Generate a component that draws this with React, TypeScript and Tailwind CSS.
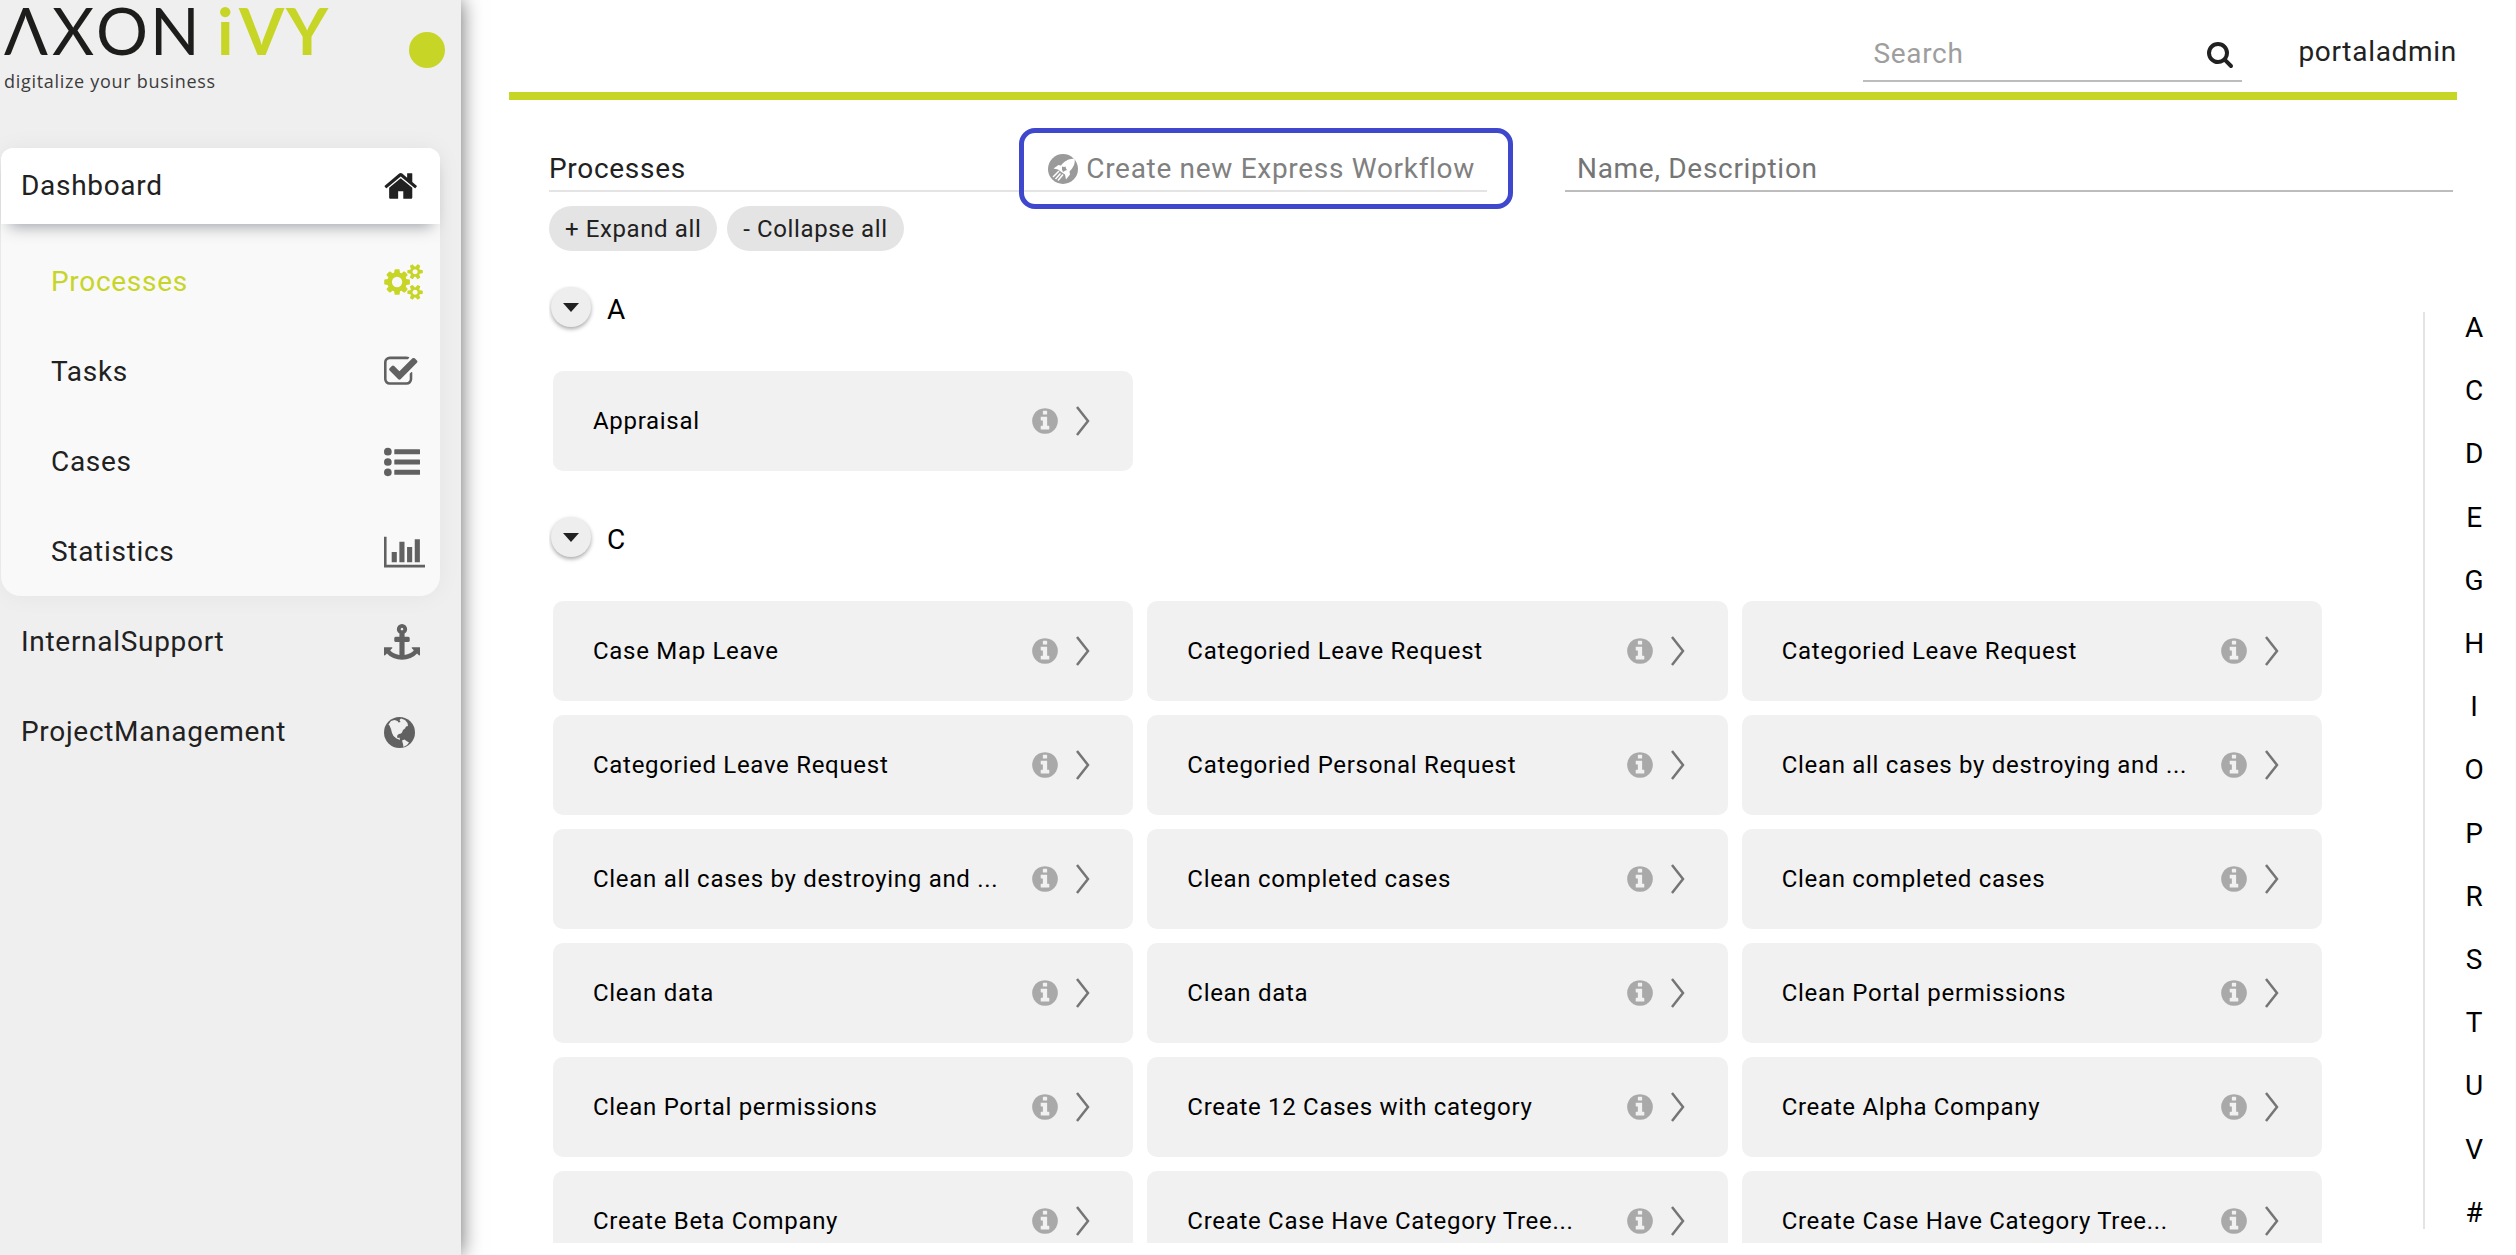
import React from "react";

type GlyphProps = { d: string; size: string; box?: string; className?: string };

function Glyph({ d, size, box = "0 0 1792 1792", className = "" }: GlyphProps) {
  return (
    <svg viewBox={box} className={`${size} shrink-0 ${className}`} fill="currentColor" aria-hidden="true">
      <path d={d} />
    </svg>
  );
}

const HOME =
  "M1472 992v480q0 26-19 45t-45 19h-384v-384h-256v384h-384q-26 0-45-19t-19-45v-480q0-1 .5-3t.5-3l575-474 575 474q1 2 1 6zm223-69l-62 74q-8 9-21 11h-3q-13 0-21-7l-692-577-692 577q-12 8-24 7-13-2-21-11l-62-74q-8-10-7-23.5t11-21.5l719-599q32-26 76-26t76 26l244 204v-195q0-14 9-23t23-9h192q14 0 23 9t9 23v408l219 182q10 8 11 21.5t-7 23.5z";
const CHECK =
  "M1472 930v318q0 119-84.5 203.5t-203.5 84.5h-832q-119 0-203.5-84.5t-84.5-203.5v-832q0-119 84.5-203.5t203.5-84.5h832q63 0 117 25 15 7 18 23 3 17-9 29l-49 49q-10 10-23 10-3 0-9-2-23-6-45-6h-832q-66 0-113 47t-47 113v832q0 66 47 113t113 47h832q66 0 113-47t47-113v-254q0-13 9-22l64-64q10-10 23-10 6 0 12 3 20 8 20 29zm231-489l-814 814q-24 24-57 24t-57-24l-430-430q-24-24-24-57t24-57l110-110q24-24 57-24t57 24l263 263 647-647q24-24 57-24t57 24l110 110q24 24 24 57t-24 57z";
const CHART =
  "M640 896v512h-256v-512h256zm384-512v1024h-256v-1024h256zm1024 1152v128h-2048v-1536h128v1408h1920zm-640-896v768h-256v-768h256zm384-384v1152h-256v-1152h256z";
const COGS =
  "M896 896q0-106-75-181t-181-75-181 75-75 181 75 181 181 75 181-75 75-181zm768 512q0-52-38-90t-90-38-90 38-38 90q0 53 37.5 90.5t90.5 37.5 90.5-37.5 37.5-90.5zm0-1024q0-52-38-90t-90-38-90 38-38 90q0 53 37.5 90.5t90.5 37.5 90.5-37.5 37.5-90.5zm-384 421v185q0 10-7 19.5t-16 10.5l-155 24q-11 35-32 76 34 48 90 115 7 11 7 20 0 12-7 19-23 30-82.5 89.5t-78.5 59.5q-11 0-21-7l-115-90q-37 19-77 31-11 108-23 155-7 24-30 24h-186q-11 0-20-7.5t-10-17.5l-23-153q-34-10-75-31l-118 89q-7 7-20 7-11 0-21-8-144-133-144-160 0-9 7-19 10-14 41-53t47-61q-23-44-35-82l-152-24q-10-1-17-9.5t-7-19.5v-185q0-10 7-19.5t16-10.5l155-24q11-35 32-76-34-48-90-115-7-11-7-20 0-12 7-20 22-30 82-89t79-59q11 0 21 7l115 90q34-18 77-32 11-108 23-154 7-24 30-24h186q11 0 20 7.5t10 17.5l23 153q34 10 75 31l118-89q8-7 20-7 11 0 21 8 144 133 144 160 0 8-7 19-12 16-42 54t-45 60q23 48 34 82l152 23q10 2 17 10.5t7 19.5zm640 533v140q0 16-149 31-12 27-30 52 51 113 51 138 0 4-4 7-122 71-124 71-8 0-46-47t-52-68q-20 2-30 2t-30-2q-14 21-52 68t-46 47q-2 0-124-71-4-3-4-7 0-25 51-138-18-25-30-52-149-15-149-31v-140q0-16 149-31 13-29 30-52-51-113-51-138 0-4 4-7 4-2 35-20t59-34 30-16q8 0 46 46.5t52 67.5q20-2 30-2t30 2q51-71 92-112l6-2q4 0 124 70 4 3 4 7 0 25-51 138 17 23 30 52 149 15 149 31zm0-1024v140q0 16-149 31-12 27-30 52 51 113 51 138 0 4-4 7-122 71-124 71-8 0-46-47t-52-68q-20 2-30 2t-30-2q-14 21-52 68t-46 47q-2 0-124-71-4-3-4-7 0-25 51-138-18-25-30-52-149-15-149-31v-140q0-16 149-31 13-29 30-52-51-113-51-138 0-4 4-7 4-2 35-20t59-34 30-16q8 0 46 46.5t52 67.5q20-2 30-2t30 2q51-71 92-112l6-2q4 0 124 70 4 3 4 7 0 25-51 138 17 23 30 52 149 15 149 31z";
const LIST =
  "M384 1408a192 192 0 1 1-384 0 192 192 0 0 1 384 0zm0-512a192 192 0 1 1-384 0 192 192 0 0 1 384 0zm0-512a192 192 0 1 1-384 0 192 192 0 0 1 384 0zM544 1280h1216q32 0 32 32v192q0 32-32 32h-1216q-32 0-32-32v-192q0-32 32-32zm0-512h1216q32 0 32 32v192q0 32-32 32h-1216q-32 0-32-32v-192q0-32 32-32zm0-512h1216q32 0 32 32v192q0 32-32 32h-1216q-32 0-32-32v-192q0-32 32-32z";
const ANCHOR =
  "M960 256q0-26-19-45t-45-19-45 19-19 45 19 45 45 19 45-19 19-45zm832 928v352q0 22-20 30-8 2-12 2-12 0-23-9l-93-93q-119 143-318.5 226.5t-429.5 83.5-429.5-83.5-318.5-226.5l-93 93q-9 9-23 9-4 0-12-2-20-8-20-30v-352q0-14 9-23t23-9h352q22 0 30 20 8 19-7 35l-100 100q67 91 189.5 153.5t271.5 82.5v-647h-192q-26 0-45-19t-19-45v-128q0-26 19-45t45-19h192v-163q-58-34-93-92.5t-35-128.5q0-106 75-181t181-75 181 75 75 181q0 70-35 128.5t-93 92.5v163h192q26 0 45 19t19 45v128q0 26-19 45t-45 19h-192v647q149-20 271.5-82.5t189.5-153.5l-100-100q-15-16-7-35 8-20 30-20h352q14 0 23 9t9 23z";
const SEARCH =
  "M1216 832q0-185-131.5-316.5t-316.5-131.5-316.5 131.5-131.5 316.5 131.5 316.5 316.5 131.5 316.5-131.5 131.5-316.5zm512 832q0 52-38 90t-90 38q-54 0-90-38l-343-342q-179 124-399 124-143 0-273.5-55.5t-225-150-150-225-55.5-273.5 55.5-273.5 150-225 225-150 273.5-55.5 273.5 55.5 225 150 150 225 55.5 273.5q0 220-124 399l343 343q37 37 37 90z";
const INFO =
  "M1152 1376v-160q0-14-9-23t-23-9h-96v-512q0-14-9-23t-23-9h-320q-14 0-23 9t-9 23v160q0 14 9 23t23 9h96v320h-96q-14 0-23 9t-9 23v160q0 14 9 23t23 9h448q14 0 23-9t9-23zm-128-896v-160q0-14-9-23t-23-9h-192q-14 0-23 9t-9 23v160q0 14 9 23t23 9h192q14 0 23-9t9-23zm640 416q0 209-103 385.5t-279.5 279.5-385.5 103-385.5-103-279.5-279.5-103-385.5 103-385.5 279.5-279.5 385.5-103 385.5 103 279.5 279.5 103 385.5z";

function Globe() {
  return (
    <svg viewBox="0 0 31 31" className="h-[31px] w-[31px] shrink-0" aria-hidden="true">
      <circle cx="15.5" cy="15.5" r="15.5" fill="#616161" />
      <path
        fill="#efefef"
        d="M4.500 7.500L7 4l3.500-1 3 1 1 1.500 2-.5-1-2 1.500-1.500 4 1.500 2.500 3 .5 3-2 .5-1 2-2 1.500-1 2.500-1 1-2 .5-1.500 1-.5 2.500 1.500.5 1-.5.500 2.500-3.500-1.500-3-2.500-1.500-3-1-4L5.500 8.500z"
      />
      <path fill="#efefef" d="M18 23.500l2.500-1 2 1.500 2.500 1.500-2 2.500-3.500 2-.5-3z" />
    </svg>
  );
}

function Rocket() {
  return (
    <svg viewBox="0 0 30 30" className="h-[30px] w-[30px] shrink-0" aria-hidden="true">
      <circle cx="15" cy="15" r="15" fill="#9a9a9a" />
      <path fill="#fff" d="M26.500 5C22 4 16.500 7 13 11.500L10.500 11 5.500 14.500 10 15.500l4 3 3 2 1 5 4-5-.5-3C25.500 13.500 27.500 9 26.500 5z" />
      <path fill="#9a9a9a" d="M14 12.500l2 .5 1.500-.5.500 2 1 1.500-2.500 1-1.500 1-1-2.500z" />
      <path stroke="#fff" strokeWidth="1.500" d="M11 17l-6 6M12.500 19.500l-5 5.500M15 20.500l-5 6" />
    </svg>
  );
}

function Logo() {
  return (
    <svg viewBox="0 0 340 100" className="h-[100px] w-[340px]" role="img" aria-label="AXON iVY, digitalize your business">
      <g fontFamily="Lato, Open Sans, sans-serif" fontSize="65">
        <text x="4 52 96 150" y="55" fill="#1d1d1b">ΛXON</text>
        <text x="217 239 286" y="55" fill="#c7d527" fontWeight="700">iVY</text>
      </g>
      <text x="4" y="88" fontFamily="Open Sans, sans-serif" fontSize="18" fill="#3c3c3b">digitalize your business</text>
    </svg>
  );
}

type NavItemProps = { label: string; icon: React.ReactNode; nested?: boolean; active?: boolean };

function NavItem({ label, icon, nested, active }: NavItemProps) {
  return (
    <a
      href="#"
      className={`flex h-[90px] items-center justify-between pt-0.5 ${nested ? "pl-[50px]" : "pl-5"} ${active ? "text-[#c7d527]" : "text-[#212121]"}`}
    >
      <span>{label}</span>
      <span className={`flex w-14 items-center ${active ? "text-[#c7d527]" : "text-[#616161]"}`}>{icon}</span>
    </a>
  );
}

function Sidebar() {
  return (
    <aside className="z-10 w-[461px] shrink-0 bg-[#efefef] shadow-[0_0_20px_rgba(0,0,0,0.6)]">
      <div className="flex h-[148px] items-start justify-between pr-4">
        <Logo />
        <button aria-label="Toggle menu" className="mt-8 h-9 w-9 rounded-full bg-[#c7d527]" />
      </div>
      <nav className="mr-[21px] ml-px">
        <div className="rounded-t-xl rounded-b-[20px] bg-[#f9f9f9] shadow-[0_0_24px_rgba(0,0,0,0.05)]">
          <a
            href="#"
            className="flex h-[76px] items-center justify-between rounded-t-xl bg-white pl-5 text-[#212121] shadow-[0_10px_16px_-8px_rgba(60,64,75,0.5)]"
          >
            <span>Dashboard</span>
            <span className="flex w-14 items-center">
              <Glyph d={HOME} box="64 0 1792 1792" size="size-9" />
            </span>
          </a>
          <div className="pt-3">
            <NavItem nested active label="Processes" icon={<Glyph d={COGS} box="0 0 1920 1792" size="h-9 w-[39px]" />} />
            <NavItem nested label="Tasks" icon={<Glyph d={CHECK} box="64 0 1792 1792" size="size-9" />} />
            <NavItem nested label="Cases" icon={<Glyph d={LIST} size="size-9" />} />
            <NavItem nested label="Statistics" icon={<Glyph d={CHART} box="0 0 2048 1792" size="h-9 w-[41px]" />} />
          </div>
        </div>
        <NavItem label="InternalSupport" icon={<Glyph d={ANCHOR} size="size-9" />} />
        <NavItem label="ProjectManagement" icon={<Globe />} />
      </nav>
    </aside>
  );
}

function Card({ name }: { name: string }) {
  return (
    <a href="#" className="flex h-[100px] items-center rounded-[10px] bg-[#f1f1f1] pr-[43px] pl-10 text-2xl text-black">
      <span className="flex-1 truncate">{name}</span>
      <Glyph d={INFO} size="size-[30px]" className="text-[#a9a9a9]" />
      <svg viewBox="0 0 14 30" className="ml-4 h-[30px] w-[14px] shrink-0" fill="none" stroke="#757575" strokeWidth="2.500" aria-hidden="true">
        <path d="M1 1l11 14L1 29" />
      </svg>
    </a>
  );
}

function Group({ letter, items }: { letter: string; items: string[] }) {
  return (
    <section className="pb-[45px]">
      <div className="flex h-[42px] items-center gap-4 pl-0.5 text-black">
        <button
          aria-label={`Collapse ${letter}`}
          className="flex size-10 items-center justify-center rounded-full bg-[#eee] shadow-[0_2px_4px_rgba(0,0,0,0.35)]"
        >
          <svg viewBox="0 0 16 9" className="h-[9px] w-4" aria-hidden="true">
            <path d="M0 0h16L8 9z" fill="#212121" />
          </svg>
        </button>
        <h2 className="pt-1.5">{letter}</h2>
      </div>
      <div className="mt-[43px] ml-1 grid grid-cols-3 gap-[14px]">
        {items.map((name, i) => (
          <Card key={i} name={name} />
        ))}
      </div>
    </section>
  );
}

const C_ITEMS = [
  "Case Map Leave",
  "Categoried Leave Request",
  "Categoried Leave Request",
  "Categoried Leave Request",
  "Categoried Personal Request",
  "Clean all cases by destroying and ...",
  "Clean all cases by destroying and ...",
  "Clean completed cases",
  "Clean completed cases",
  "Clean data",
  "Clean data",
  "Clean Portal permissions",
  "Clean Portal permissions",
  "Create 12 Cases with category",
  "Create Alpha Company",
  "Create Beta Company",
  "Create Case Have Category Tree...",
  "Create Case Have Category Tree...",
];

const LETTERS = ["A", "C", "D", "E", "G", "H", "I", "O", "P", "R", "S", "T", "U", "V", "#"];

export default function App() {
  return (
    <div className="flex h-screen overflow-hidden bg-white font-[Roboto,sans-serif] text-[28px] leading-8 tracking-wide text-[#212121]">
      <Sidebar />
      <div className="flex min-w-0 flex-1 flex-col pl-12">
        <header className="mr-[59px] flex h-[100px] shrink-0 items-start justify-end border-b-8 border-[#c7d527] pt-7">
          <div className="flex h-[54px] w-[379px] items-center border-b-2 border-[#bdbdbd] pr-2 pl-[10px]">
            <input aria-label="Search" placeholder="Search" className="min-w-0 flex-1 tracking-wide outline-none placeholder:text-[#9e9e9e]" />
            <button aria-label="Run search">
              <Glyph d={SEARCH} size="size-7" />
            </button>
          </div>
          <a href="#" className="ml-14 pt-2">portaladmin</a>
        </header>

        <main className="flex min-h-0 flex-1 flex-col pl-10">
          <div className="mr-[63px] flex pt-[27px]">
            <div className="mt-2 mb-2 flex h-[57px] w-[938px] items-center justify-between border-b-2 border-[#e4e4e4] pt-3">
              <h1>Processes</h1>
              <div className="relative">
                <a href="#" className="flex items-center gap-2 pr-3 text-[#808080]">
                  <Rocket />
                  Create new Express Workflow
                </a>
                <div className="pointer-events-none absolute -top-[25px] -right-[26px] -bottom-[24px] -left-[29px] rounded-2xl border-[5px] border-[#3f48cc]" />
              </div>
            </div>
            <input
              aria-label="Name, Description"
              placeholder="Name, Description"
              className="mt-2 ml-[78px] h-[57px] min-w-0 flex-1 border-b-2 border-[#bdbdbd] pt-3 pl-3 tracking-wide outline-none placeholder:text-[#757575]"
            />
          </div>
          <div className="mt-[6px] flex gap-[10px] text-2xl">
            <button className="h-[45px] rounded-full bg-[#e4e4e4] px-4 tracking-wide">+ Expand all</button>
            <button className="h-[45px] rounded-full bg-[#e4e4e4] px-4 tracking-wide">- Collapse all</button>
          </div>
          <div className="mt-[35px] flex min-h-0 flex-1">
            <div className="mb-3 flex-1 overflow-hidden pr-[101px]">
              <Group letter="A" items={["Appraisal"]} />
              <Group letter="C" items={C_ITEMS} />
            </div>
            <nav
              aria-label="Alphabet"
              className="mt-[26px] mb-[26px] flex w-[93px] shrink-0 flex-col items-center justify-between border-l-2 border-[#e4e4e4] pl-2 text-black"
            >
              {LETTERS.map((l) => (
                <a key={l} href="#">{l}</a>
              ))}
            </nav>
          </div>
        </main>
      </div>
    </div>
  );
}
